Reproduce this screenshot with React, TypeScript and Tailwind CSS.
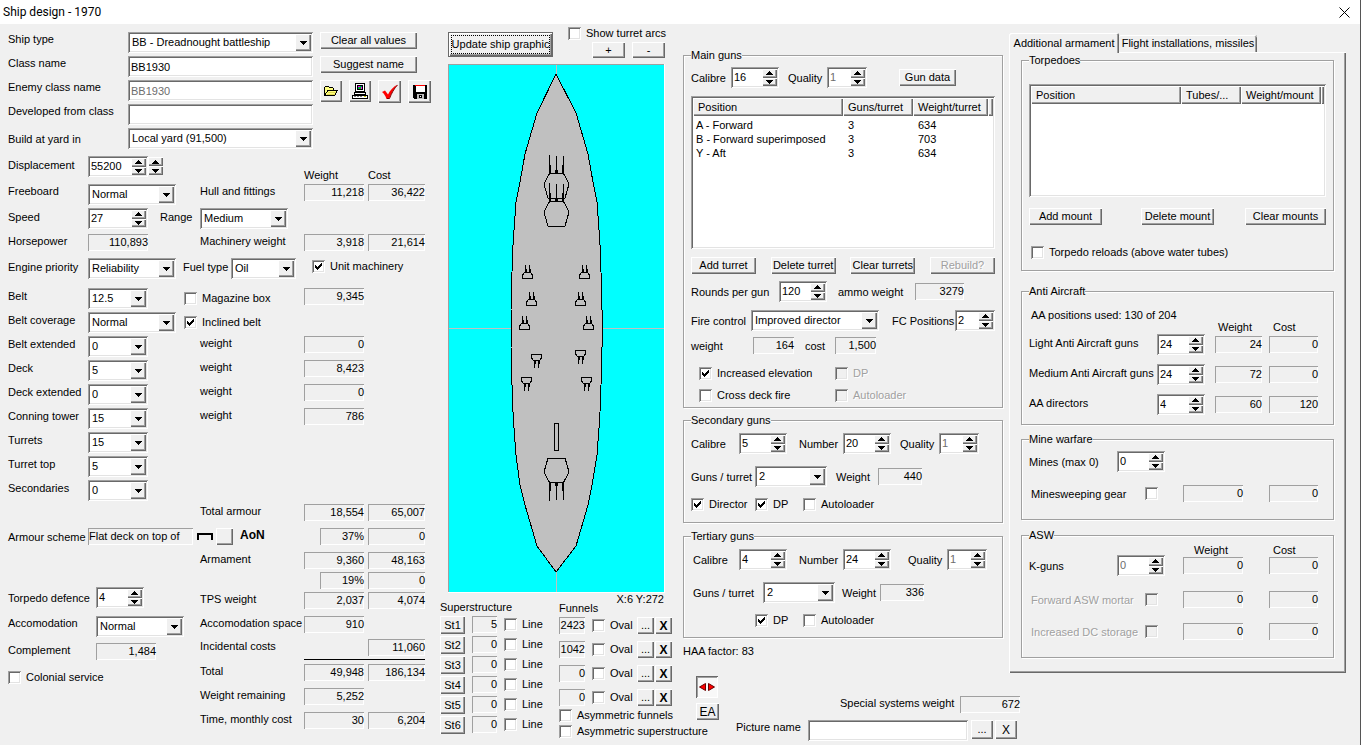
import { ReactNode, useState } from 'react';

const sunken =
  'shadow-[inset_1px_1px_#a0a0a0,inset_-1px_-1px_#fff,inset_2px_2px_#696969,inset_-2px_-2px_#e3e3e3]';
const raised =
  'bg-[#f0f0f0] shadow-[inset_1px_1px_#fff,inset_-1px_-1px_#696969,inset_-2px_-2px_#a0a0a0] active:shadow-[inset_1px_1px_#696969]';
const etched = 'shadow-[inset_1px_1px_#a0a0a0,inset_-1px_-1px_#fff]';

interface LabelProps {
  children: ReactNode;
  htmlFor?: string;
  className?: string;
}

const Label = ({ children, htmlFor, className = '' }: LabelProps) => (
  <label
    htmlFor={htmlFor}
    className={`block shrink-0 whitespace-nowrap leading-[14px] ${className}`}
  >
    {children}
  </label>
);

const DownArrow = () => (
  <svg width="7" height="4" viewBox="0 0 7 4" shapeRendering="crispEdges">
    <path d="M0 0h7v1h-1v1h-1v1h-1v1h-1v-1h-1v-1h-1v-1h-1z" />
  </svg>
);

const UpArrow = () => (
  <svg width="7" height="4" viewBox="0 0 7 4" shapeRendering="crispEdges">
    <path d="M0 4h7v-1h-1v-1h-1v-1h-1v-1h-1v1h-1v1h-1v1h-1z" />
  </svg>
);

interface SelectProps {
  id: string;
  value: string;
  options?: string[];
  className?: string;
}

const Select = ({ id, value, options = [], className = '' }: SelectProps) => (
  <div className={`relative h-[21px] shrink-0 bg-white ${sunken} ${className}`}>
    <select
      id={id}
      defaultValue={value}
      className="h-full w-full appearance-none bg-transparent pl-1 outline-none"
    >
      <option>{value}</option>
      {options.map((option) => (
        <option key={option}>{option}</option>
      ))}
    </select>
    <span
      className={`pointer-events-none absolute inset-y-0.5 right-0.5 flex w-4 items-center justify-center ${raised}`}
    >
      <DownArrow />
    </span>
  </div>
);

const SpinButtons = ({ name }: { name: string }) => (
  <span className="flex w-[15px] shrink-0 flex-col">
    <button
      type="button"
      aria-label={`Increase ${name}`}
      className={`flex flex-1 items-center justify-center ${raised}`}
    >
      <UpArrow />
    </button>
    <button
      type="button"
      aria-label={`Decrease ${name}`}
      className={`flex flex-1 items-center justify-center ${raised}`}
    >
      <DownArrow />
    </button>
  </span>
);

interface SpinnerProps {
  id: string;
  value: string;
  disabled?: boolean;
  className?: string;
}

const Spinner = ({ id, value, disabled, className = 'w-12' }: SpinnerProps) => (
  <div className={`flex h-[21px] shrink-0 bg-white p-0.5 ${sunken} ${className}`}>
    <input
      id={id}
      type="text"
      defaultValue={value}
      disabled={disabled}
      className="w-0 min-w-0 flex-1 bg-transparent pl-px outline-none disabled:text-[#6d6d6d]"
    />
    <SpinButtons name={id} />
  </div>
);

interface TextBoxProps {
  id: string;
  value?: string;
  disabled?: boolean;
  className?: string;
}

const TextBox = ({ id, value, disabled, className = '' }: TextBoxProps) => (
  <input
    id={id}
    type="text"
    defaultValue={value}
    disabled={disabled}
    className={`h-[21px] shrink-0 bg-white px-[3px] outline-none disabled:text-[#6d6d6d] ${sunken} ${className}`}
  />
);

const Value = ({
  children,
  className = 'w-15',
}: {
  children: ReactNode;
  className?: string;
}) => (
  <output
    className={`block h-[17px] shrink-0 text-right leading-[17px] ${etched} ${className}`}
  >
    {children}
  </output>
);

interface CheckProps {
  children?: ReactNode;
  label?: string;
  checked?: boolean;
  disabled?: boolean;
  className?: string;
}

const Check = ({
  children,
  label,
  checked,
  disabled,
  className = '',
}: CheckProps) => (
  <label
    className={`flex h-[13px] shrink-0 items-center whitespace-nowrap ${
      disabled ? 'text-[#a0a0a0] [text-shadow:1px_1px_#fff]' : ''
    } ${className}`}
  >
    <span className="grid size-[13px] shrink-0">
      <input
        type="checkbox"
        aria-label={label}
        defaultChecked={checked}
        disabled={disabled}
        className={`peer col-start-1 row-start-1 size-[13px] appearance-none bg-white outline-none disabled:bg-[#f0f0f0] ${sunken}`}
      />
      <svg
        viewBox="0 0 13 13"
        shapeRendering="crispEdges"
        className="pointer-events-none invisible col-start-1 row-start-1 size-[13px] peer-checked:visible"
      >
        <path d="M3 5h1v1h1v1h1v-1h1v-1h1v-1h1v-1h1v3h-1v1h-1v1h-1v1h-1v1h-1v-1h-1v-1h-1z" />
      </svg>
    </span>
    {children && <span className="pl-[5px]">{children}</span>}
  </label>
);

interface ButtonProps {
  children?: ReactNode;
  label?: string;
  disabled?: boolean;
  className?: string;
}

const Button = ({ children, label, disabled, className = '' }: ButtonProps) => (
  <button
    type="button"
    aria-label={label}
    disabled={disabled}
    className={`flex shrink-0 items-center justify-center whitespace-nowrap disabled:text-[#a0a0a0] disabled:[text-shadow:1px_1px_#fff] ${raised} ${className}`}
  >
    {children}
  </button>
);

const Group = ({
  title,
  children,
  className = '',
}: {
  title: string;
  children: ReactNode;
  className?: string;
}) => (
  <fieldset
    className={`min-w-0 border border-[#a0a0a0] shadow-[1px_1px_#fff,inset_1px_1px_#fff] ${className}`}
  >
    <legend className="ml-[7px] bg-[#f0f0f0] leading-4">{title}</legend>
    {children}
  </fieldset>
);

interface ListProps {
  label: string;
  columns: { title: string; width: string }[];
  rows: string[][];
  className?: string;
}

const List = ({ label, columns, rows, className = '' }: ListProps) => (
  <div className={`overflow-hidden bg-white p-0.5 ${sunken} ${className}`}>
    <table aria-label={label} className="w-full table-fixed border-collapse">
      <thead>
        <tr>
          {columns.map((column) => (
            <th
              key={column.title}
              className={`h-[18px] truncate pl-[5px] text-left font-normal ${raised} ${column.width}`}
            >
              {column.title}
            </th>
          ))}
          <td className={`h-[18px] ${raised}`} />
        </tr>
      </thead>
      <tbody className="before:block before:h-0.5">
        {rows.map((row) => (
          <tr key={row[0]} className="h-3.5">
            {row.map((cell, i) => (
              <td
                key={i}
                className={`p-0 leading-3.5 whitespace-nowrap ${i ? 'pl-[5px]' : 'pl-[3px]'}`}
              >
                {cell}
              </td>
            ))}
            <td />
          </tr>
        ))}
      </tbody>
    </table>
  </div>
);

const FolderIcon = () => (
  <svg width="16" height="16" viewBox="0 0 16 16" shapeRendering="crispEdges">
    <path
      d="M1.500 12.500V4.500L2.500 3.500H5.500L6.500 4.500H9.500L10.500 5.500V7.500H14.500L11.500 12.500z"
      fill="#ffff80"
      stroke="#000"
    />
    <path d="M2 11.500L5 7.500H11" fill="none" stroke="#000" />
    <path d="M5 9h8v1H5zM4 11h8v1H4z" fill="#e0d850" />
  </svg>
);

const PrinterIcon = () => (
  <svg width="16" height="16" viewBox="0 0 16 16" shapeRendering="crispEdges">
    <path d="M3.500 .5h9v8h-9z" fill="#fff" stroke="#000" />
    <path d="M5.500 2.500h5v4h-5z" fill="#008080" stroke="#000" />
    <path d="M6 3h2v1H6zM9 4h1v2H9z" fill="#f0f" />
    <path d="M7 4h2v2H7z" fill="#0c0" />
    <path d="M2.500 9.500h11v2h-11zM.5 12.500h15v3H.5z" fill="#fff" stroke="#000" />
    <path d="M2 13.500h2M5 13.500h2M8 13.500h2" stroke="#808080" />
    <path d="M12 13h2v1h-2z" fill="#cc0" />
  </svg>
);

const TickIcon = () => (
  <svg width="16" height="16" viewBox="0 0 16 16">
    <path
      d="M0 8L3 6.500L6 10.500C8 6.500 11 3 15.500 .5C12 4.500 9.500 9 7 15H4.500C3.500 12 2 9.500 0 8z"
      fill="#f00"
    />
    <path
      d="M15.500 1C12 4.500 9.500 9.500 7.500 14.500H5"
      fill="none"
      stroke="#800000"
    />
  </svg>
);

const DiskIcon = () => (
  <svg width="16" height="16" viewBox="0 0 16 16" shapeRendering="crispEdges">
    <path d="M1 1h14v14H2l-1-1z" />
    <path d="M4 2h9v6H4z" fill="#fff" />
    <path d="M3 1h10v1H3z" fill="#f00" />
    <path d="M5 10h7v5H5z" fill="#c0c0c0" />
    <path d="M7 11h3v3H7z" />
    <path d="M8 12h1v1H8z" fill="#fff" />
  </svg>
);

const TripleTurret = () => (
  <g>
    <path d="M-6.500 -10.500L-12 0L-8 14H9L13 0L7.500 -10.500" />
    <path d="M-6.500 -29V-10M.5 -28V-10M7.500 -28V-10" />
    <path d="M-5.500 -19V-10.500H-.5V-14M1.500 -14V-10.500H6.500V-19" />
  </g>
);

const TwinTurret = () => (
  <g>
    <path d="M-1.500 -7V0M2.500 -7V0" />
    <path d="M-.5 -3V0M3.500 -3V0" />
    <path d="M-2.500 .5H3.500L5.500 3V6.500H-4.500V3z" />
  </g>
);

const hull =
  '108,10 128,49 140,90 145,118 149,138 151,166 152,181 153,208 154,246 154,283 153,321 152,348 151,364 149,391 144,421 140,441 128,482 108,508 89,482 77,441 72,421 68,391 66,364 65,348 64,321 63,283 63,246 64,208 65,181 66,166 68,138 72,118 77,90 89,49';

const mainTurrets = [
  { x: 108, y: 120, flip: 1 },
  { x: 108, y: 148, flip: 1 },
  { x: 108, y: 408, flip: -1 },
];

const lightTurrets = [
  { x: 79, y: 208, flip: 1 },
  { x: 136, y: 208, flip: 1 },
  { x: 83, y: 235, flip: 1 },
  { x: 132, y: 235, flip: 1 },
  { x: 76, y: 259, flip: 1 },
  { x: 140, y: 259, flip: 1 },
  { x: 88, y: 297, flip: -1 },
  { x: 132, y: 293, flip: -1 },
  { x: 78, y: 320, flip: -1 },
  { x: 138, y: 320, flip: -1 },
];

const ShipGraphic = () => (
  <svg
    viewBox="0 0 217 529"
    shapeRendering="crispEdges"
    role="img"
    aria-label="Ship graphic"
    className="block h-[529px] w-[217px] shrink-0"
  >
    <rect width="217" height="529" fill="#0ff" />
    <path d="M0 264.500H217M108.500 0V529" stroke="#c0c0c0" />
    <polygon points={hull} fill="#c0c0c0" stroke="#000" />
    <g fill="none" stroke="#000">
      {mainTurrets.map((t) => (
        <g key={t.y} transform={`translate(${t.x} ${t.y}) scale(1 ${t.flip})`}>
          <TripleTurret />
        </g>
      ))}
      {lightTurrets.map((t) => (
        <g
          key={`${t.x}-${t.y}`}
          transform={`translate(${t.x} ${t.y}) scale(1 ${t.flip})`}
        >
          <TwinTurret />
        </g>
      ))}
      <rect x="106.500" y="359.500" width="4" height="27" />
    </g>
    <path d="M.5 529V.5H217" fill="none" stroke="#a0a0a0" />
    <path d="M216.500 0V528.500H0" fill="none" stroke="#fff" />
  </svg>
);

const armour = [
  { id: 'belt-extended', label: 'Belt extended', value: '0', weight: '0' },
  { id: 'deck', label: 'Deck', value: '5', weight: '8,423' },
  { id: 'deck-extended', label: 'Deck extended', value: '0', weight: '0' },
  { id: 'conning-tower', label: 'Conning tower', value: '15', weight: '786' },
  { id: 'turrets', label: 'Turrets', value: '15' },
  { id: 'turret-top', label: 'Turret top', value: '5' },
  { id: 'secondaries', label: 'Secondaries', value: '0' },
];

const HullForm = () => (
  <div className="pt-2 pl-2">
    <div className="flex gap-[7px]">
      <div className="flex flex-col gap-[3px]">
        <div className="flex">
          <Label htmlFor="ship-type" className="w-[120px]">
            Ship type
          </Label>
          <Select
            id="ship-type"
            value="BB - Dreadnought battleship"
            className="w-[185px]"
          />
        </div>
        <div className="flex">
          <Label htmlFor="class-name" className="w-[120px]">
            Class name
          </Label>
          <TextBox id="class-name" value="BB1930" className="w-[185px]" />
        </div>
        <div className="flex">
          <Label htmlFor="enemy-name" className="w-[120px]">
            Enemy class name
          </Label>
          <TextBox id="enemy-name" value="BB1930" disabled className="w-[185px]" />
        </div>
        <div className="flex">
          <Label htmlFor="developed-from" className="w-[120px]">
            Developed from class
          </Label>
          <TextBox id="developed-from" className="w-[185px]" />
        </div>
        <div className="flex items-center">
          <Label htmlFor="yard" className="w-[120px]">
            Build at yard in
          </Label>
          <Select id="yard" value="Local yard (91,500)" className="w-[185px]" />
        </div>
      </div>
      <div className="flex flex-col gap-[7px]">
        <Button className="h-[17px] w-[97px]">Clear all values</Button>
        <Button className="h-[17px] w-[97px]">Suggest name</Button>
        <div className="flex gap-[7px]">
          <Button label="Open" className="size-[22px]">
            <FolderIcon />
          </Button>
          <Button label="Print" className="size-[22px]">
            <PrinterIcon />
          </Button>
          <Button label="Accept" className="size-[23px]">
            <TickIcon />
          </Button>
          <Button label="Save" className="size-[23px]">
            <DiskIcon />
          </Button>
        </div>
      </div>
    </div>

    <div className="mt-[7px] flex h-7">
      <Label htmlFor="displacement" className="w-20 pt-0.5">
        Displacement
      </Label>
      <Spinner id="displacement" value="55200" className="w-15" />
      <span className="mt-px flex h-[18px]">
        <SpinButtons name="displacement step" />
      </span>
      <Label className="ml-[141px] w-16 self-end pb-0.5">Weight</Label>
      <Label className="self-end pb-0.5">Cost</Label>
    </div>
    <div className="flex h-6">
      <Label htmlFor="freeboard" className="w-20">
        Freeboard
      </Label>
      <Select id="freeboard" value="Normal" className="w-22" />
      <Label className="ml-6 w-26">Hull and fittings</Label>
      <Value>11,218</Value>
      <Value className="ml-1 w-[57px]">36,422</Value>
    </div>
    <div className="flex h-[26px]">
      <Label htmlFor="speed" className="w-20 pt-0.5">
        Speed
      </Label>
      <Spinner id="speed" value="27" className="w-15" />
      <Label htmlFor="range" className="ml-3 w-10 pt-0.5">
        Range
      </Label>
      <Select id="range" value="Medium" options={['Short', 'Long']} className="w-22" />
    </div>
    <div className="flex h-6">
      <Label className="w-20">Horsepower</Label>
      <Value>110,893</Value>
      <Label className="ml-13 w-26">Machinery weight</Label>
      <Value>3,918</Value>
      <Value className="ml-1 w-[57px]">21,614</Value>
    </div>
    <div className="flex h-[30px]">
      <Label htmlFor="engine-priority" className="w-20 pt-0.5">
        Engine priority
      </Label>
      <Select
        id="engine-priority"
        value="Reliability"
        options={['Normal', 'Speed']}
        className="w-22"
      />
      <Label htmlFor="fuel" className="ml-[7px] w-12 pt-0.5">
        Fuel type
      </Label>
      <Select id="fuel" value="Oil" options={['Coal']} className="w-[65px]" />
      <Check checked className="mt-0.5 ml-4">
        Unit machinery
      </Check>
    </div>
    <div className="flex h-6">
      <Label htmlFor="belt" className="w-20 pt-px">
        Belt
      </Label>
      <Select id="belt" value="12.5" className="w-15" />
      <Check className="mt-1 ml-9 w-30">Magazine box</Check>
      <Value>9,345</Value>
    </div>
    <div className="flex h-6">
      <Label htmlFor="belt-coverage" className="w-20 pt-px">
        Belt coverage
      </Label>
      <Select id="belt-coverage" value="Normal" className="w-22" />
      <Check checked className="mt-1 ml-2">
        Inclined belt
      </Check>
    </div>
    {armour.map((row) => (
      <div key={row.id} className="flex h-6">
        <Label htmlFor={row.id} className="w-20 pt-px">
          {row.label}
        </Label>
        <Select id={row.id} value={row.value} className="w-15" />
        {row.weight && (
          <>
            <Label className="ml-13 w-26">weight</Label>
            <Value>{row.weight}</Value>
          </>
        )}
      </div>
    ))}
    <div className="flex h-6 pl-48">
      <Label className="w-26">Total armour</Label>
      <Value>18,554</Value>
      <Value className="ml-1 w-[57px]">65,007</Value>
    </div>
    <div className="flex h-6">
      <Label className="w-20 pt-0.5">Armour scheme</Label>
      <div className={`h-[17px] w-[105px] pl-px leading-[17px] whitespace-nowrap ${etched}`}>
        Flat deck on top of
      </div>
      <svg
        width="16"
        height="8"
        viewBox="0 0 16 8"
        shapeRendering="crispEdges"
        className="mt-1 ml-1"
      >
        <path
          d="M1 8V1.500H15V8"
          fill="none"
          stroke="#000"
          strokeWidth="2"
        />
      </svg>
      <Button label="Change armour scheme" className="ml-[3px] size-[17px]" />
      <span className="ml-[7px] w-20 text-xs leading-[14px] font-bold">AoN</span>
      <Value className="w-11">37%</Value>
      <Value className="ml-1 w-[57px]">0</Value>
    </div>
    <div className="flex">
      <div className="w-48 pt-[35px]">
        <div className="flex h-[29px]">
          <Label htmlFor="torpedo-defence" className="w-22 pt-1">
            Torpedo defence
          </Label>
          <Spinner id="torpedo-defence" value="4" />
        </div>
        <div className="flex h-[27px]">
          <Label htmlFor="accomodation" className="w-22">
            Accomodation
          </Label>
          <Select
            id="accomodation"
            value="Normal"
            options={['Cramped', 'Spacious']}
            className="w-22"
          />
        </div>
        <div className="flex h-7">
          <Label className="w-22">Complement</Label>
          <Value>1,484</Value>
        </div>
        <Check>Colonial service</Check>
      </div>
      <div>
        <div className="flex h-5">
          <Label className="w-26">Armament</Label>
          <Value>9,360</Value>
          <Value className="ml-1 w-[57px]">48,163</Value>
        </div>
        <div className="flex h-5 pl-30">
          <Value className="w-11">19%</Value>
          <Value className="ml-1 w-[57px]">0</Value>
        </div>
        <div className="flex h-6">
          <Label className="w-26">TPS weight</Label>
          <Value>2,037</Value>
          <Value className="ml-1 w-[57px]">4,074</Value>
        </div>
        <div className="flex h-[23px]">
          <Label className="w-26">Accomodation space</Label>
          <Value>910</Value>
        </div>
        <div className="flex h-5">
          <Label className="w-42">Incidental costs</Label>
          <Value className="w-[57px]">11,060</Value>
        </div>
        <hr className="ml-26 h-[5px] border-0 border-t border-black" />
        <div className="flex h-6">
          <Label className="w-26">Total</Label>
          <Value>49,948</Value>
          <Value className="ml-1 w-[57px]">186,134</Value>
        </div>
        <div className="flex h-6">
          <Label className="w-26">Weight remaining</Label>
          <Value>5,252</Value>
        </div>
        <div className="flex h-6">
          <Label className="w-26">Time, monthly cost</Label>
          <Value>30</Value>
          <Value className="ml-1 w-[57px]">6,204</Value>
        </div>
      </div>
    </div>
  </div>
);

const superstructure = ['5', '0', '0', '0', '0', '0'];
const funnels = ['2423', '1042', '0', '0'];

const ShipView = () => (
  <div className="pt-[3px]">
    <div className="flex h-[37px] pl-2">
      <Button className="mt-[5px] h-[25px] w-[105px] border border-[#696969] p-0.5">
        <span className="flex h-full w-full items-center justify-center border border-dotted border-black">
          Update ship graphic
        </span>
      </Button>
      <div className="ml-[15px]">
        <Check>Show turret arcs</Check>
        <div className="mt-0.5 ml-6 flex gap-[7px]">
          <Button className="h-4 w-[33px]">+</Button>
          <Button className="h-4 w-[33px]">-</Button>
        </div>
      </div>
    </div>
    <div className="w-[225px] pl-2">
      <ShipGraphic />
      <p className="h-[7px] pr-px text-right leading-3">X:6 Y:272</p>
    </div>
    <div className="flex">
      <div className="w-[119px] shrink-0">
        <h2 className="h-4 leading-[14px]">Superstructure</h2>
        {superstructure.map((count, i) => (
          <div key={i} className="flex h-5 items-start">
            <Button className="h-[18px] w-[25px]">St{i + 1}</Button>
            <Value className="ml-[7px] w-[25px]">{count}</Value>
            <Check className="mt-0.5 ml-[7px]">Line</Check>
          </div>
        ))}
      </div>
      <div className="shrink-0">
        <h2 className="h-[17px] leading-4">Funnels</h2>
        {funnels.map((size, i) => (
          <div key={i} className="flex h-6 items-start">
            <Value className="w-[26px]">{size}</Value>
            <Check className="mt-0.5 ml-[7px] w-[45px]">Oval</Check>
            <Button className="h-[17px] w-[17px]">...</Button>
            <Button
              label="Remove funnel"
              className="ml-px h-[17px] w-[17px] text-xs font-bold"
            >
              X
            </Button>
          </div>
        ))}
        <Check className="-mt-1">Asymmetric funnels</Check>
        <Check className="mt-[3px]">Asymmetric superstructure</Check>
      </div>
    </div>
  </div>
);

const MainGuns = () => (
  <Group title="Main guns" className="h-[361px]">
    <div className="px-[7px] pt-1">
      <div className="flex items-center">
        <Label htmlFor="calibre-main" className="w-10">
          Calibre
        </Label>
        <Spinner id="calibre-main" value="16" />
        <Label htmlFor="quality-main" className="ml-[9px] w-[39px]">
          Quality
        </Label>
        <Spinner id="quality-main" value="1" disabled className="w-10" />
        <Button className="ml-8 h-[17px] w-[57px]">Gun data</Button>
      </div>
      <List
        label="Main gun turrets"
        columns={[
          { title: 'Position', width: 'w-[150px]' },
          { title: 'Guns/turret', width: 'w-[70px]' },
          { title: 'Weight/turret', width: 'w-[75px]' },
        ]}
        rows={[
          ['A - Forward', '3', '634'],
          ['B - Forward superimposed', '3', '703'],
          ['Y - Aft', '3', '634'],
        ]}
        className="mt-2 h-[153px]"
      />
      <div className="mt-2 flex justify-between">
        <Button className="h-[17px] w-[65px]">Add turret</Button>
        <Button className="h-[17px] w-[65px]">Delete turret</Button>
        <Button className="h-[17px] w-[65px]">Clear turrets</Button>
        <Button disabled className="h-[17px] w-[65px]">
          Rebuild?
        </Button>
      </div>
      <div className="mt-[7px] flex items-center">
        <Label htmlFor="rounds" className="w-22">
          Rounds per gun
        </Label>
        <Spinner id="rounds" value="120" />
        <Label className="ml-[11px] w-[77px]">ammo weight</Label>
        <Value className="w-[49px]">3279</Value>
      </div>
      <div className="mt-2 flex items-center">
        <Label htmlFor="fire-control" className="w-15">
          Fire control
        </Label>
        <Select id="fire-control" value="Improved director" className="w-32" />
        <Label htmlFor="fc-positions" className="ml-[13px] w-[63px]">
          FC Positions
        </Label>
        <Spinner id="fc-positions" value="2" className="w-10" />
      </div>
      <div className="mt-1.5 flex items-center">
        <Label className="w-[62px]">weight</Label>
        <Value className="w-[41px]">164</Value>
        <Label className="ml-[11px] w-[30px]">cost</Label>
        <Value className="w-[41px]">1,500</Value>
      </div>
      <div className="mt-[13px] grid grid-cols-[136px_auto] gap-y-[9px] pl-2">
        <Check checked>Increased elevation</Check>
        <Check disabled>DP</Check>
        <Check>Cross deck fire</Check>
        <Check disabled>Autoloader</Check>
      </div>
    </div>
  </Group>
);

const SecondaryGuns = () => (
  <Group title="Secondary guns" className="mt-1 h-[111px]">
    <div className="px-[7px] pt-[5px]">
      <div className="flex items-center">
        <Label htmlFor="calibre-sec" className="w-12">
          Calibre
        </Label>
        <Spinner id="calibre-sec" value="5" />
        <Label htmlFor="number-sec" className="ml-3 w-11">
          Number
        </Label>
        <Spinner id="number-sec" value="20" />
        <Label htmlFor="quality-sec" className="ml-[9px] w-[39px]">
          Quality
        </Label>
        <Spinner id="quality-sec" value="1" disabled className="w-10" />
      </div>
      <div className="mt-3 flex items-center">
        <Label htmlFor="per-turret-sec" className="w-16">
          Guns / turret
        </Label>
        <Select id="per-turret-sec" value="2" className="w-18" />
        <Label className="ml-[9px] w-[42px]">Weight</Label>
        <Value className="w-11">440</Value>
      </div>
      <div className="mt-[11px] flex">
        <Check checked className="w-16">
          Director
        </Check>
        <Check checked className="w-12">
          DP
        </Check>
        <Check>Autoloader</Check>
      </div>
    </div>
  </Group>
);

const TertiaryGuns = () => (
  <Group title="Tertiary guns" className="mt-[5px] h-[110px]">
    <div className="pt-[5px] pl-[9px]">
      <div className="flex items-center">
        <Label htmlFor="calibre-ter" className="w-[46px]">
          Calibre
        </Label>
        <Spinner id="calibre-ter" value="4" />
        <Label htmlFor="number-ter" className="ml-3 w-11">
          Number
        </Label>
        <Spinner id="number-ter" value="24" />
        <Label htmlFor="quality-ter" className="ml-[17px] w-[39px]">
          Quality
        </Label>
        <Spinner id="quality-ter" value="1" disabled className="w-10" />
      </div>
      <div className="mt-3 flex items-center">
        <Label htmlFor="per-turret-ter" className="w-[70px]">
          Guns / turret
        </Label>
        <Select id="per-turret-ter" value="2" className="w-18" />
        <Label className="ml-[7px] w-[38px]">Weight</Label>
        <Value className="w-11">336</Value>
      </div>
      <div className="mt-[11px] flex pl-[62px]">
        <Check checked className="w-12">
          DP
        </Check>
        <Check>Autoloader</Check>
      </div>
    </div>
  </Group>
);

const antiAircraft = [
  { id: 'light-aa', label: 'Light Anti Aircraft guns', value: '24', weight: '24', cost: '0' },
  { id: 'medium-aa', label: 'Medium Anti Aircraft guns', value: '24', weight: '72', cost: '0' },
  { id: 'aa-directors', label: 'AA directors', value: '4', weight: '60', cost: '120' },
];

const AdditionalArmament = () => (
  <div className="px-3 pb-[15px]">
    <Group title="Torpedoes" className="h-[219px]">
      <div className="px-[7px] pt-4">
        <List
          label="Torpedo mounts"
          columns={[
            { title: 'Position', width: 'w-[150px]' },
            { title: 'Tubes/...', width: 'w-[60px]' },
            { title: 'Weight/mount', width: 'w-[80px]' },
          ]}
          rows={[]}
          className="h-[113px]"
        />
        <div className="mt-[11px] flex justify-between">
          <Button className="h-[17px] w-[73px]">Add mount</Button>
          <Button className="ml-2 h-[17px] w-[73px]">Delete mount</Button>
          <Button className="h-[17px] w-[81px]">Clear mounts</Button>
        </div>
        <Check className="mt-[21px] ml-0.5">
          Torpedo reloads (above water tubes)
        </Check>
      </div>
    </Group>

    <Group title="Anti Aircraft" className="mt-3 h-[142px]">
      <div className="px-[7px] pt-[9px]">
        <div className="flex h-[26px]">
          <Label className="w-[189px] pl-0.5">AA positions used: 130 of 204</Label>
          <Label className="w-[55px] self-end">Weight</Label>
          <Label className="self-end">Cost</Label>
        </div>
        {antiAircraft.map((gun) => (
          <div key={gun.id} className="flex h-[30px] items-start">
            <Label htmlFor={gun.id} className="w-32 pt-0.5">
              {gun.label}
            </Label>
            <Spinner id={gun.id} value={gun.value} />
            <Value className="mt-0.5 ml-2.5 w-[47px]">{gun.weight}</Value>
            <Value className="mt-0.5 ml-[7px] w-[49px]">{gun.cost}</Value>
          </div>
        ))}
      </div>
    </Group>

    <Group title="Mine warfare" className="mt-1.5 h-[89px]">
      <div className="px-[7px] pt-1">
        <div className="flex items-center">
          <Label htmlFor="mines" className="w-22">
            Mines (max 0)
          </Label>
          <Spinner id="mines" value="0" />
        </div>
        <div className="mt-[13px] flex items-center pl-0.5">
          <Label className="w-[114px]">Minesweeping gear</Label>
          <Check label="Minesweeping gear" />
          <Value className="ml-[25px] w-15">0</Value>
          <Value className="ml-[26px] w-[49px]">0</Value>
        </div>
      </div>
    </Group>

    <Group title="ASW" className="mt-[7px] h-[131px]">
      <div className="px-[7px]">
        <div className="flex h-3 pl-[165px]">
          <Label className="w-[79px]">Weight</Label>
          <Label>Cost</Label>
        </div>
        <div className="flex items-center">
          <Label htmlFor="k-guns" className="w-22">
            K-guns
          </Label>
          <Spinner id="k-guns" value="0" disabled />
          <Value className="ml-[18px] w-15">0</Value>
          <Value className="ml-[26px] w-[49px]">0</Value>
        </div>
        {['Forward ASW mortar', 'Increased DC storage'].map((name) => (
          <div key={name} className="mt-[15px] flex items-center pl-0.5">
            <Label className="w-[114px] text-[#a0a0a0] [text-shadow:1px_1px_#fff]">
              {name}
            </Label>
            <Check label={name} disabled />
            <Value className="ml-[25px] w-15">0</Value>
            <Value className="ml-[26px] w-[49px]">0</Value>
          </div>
        ))}
      </div>
    </Group>
  </div>
);

const ArmamentTabs = () => {
  const [tab, setTab] = useState(0);

  return (
    <div className="w-[337px] pt-[9px]">
      <div role="tablist" className="flex h-[19px] items-end">
        <button
          type="button"
          role="tab"
          aria-selected={tab === 0}
          onClick={() => setTab(0)}
          className="z-10 -mb-px h-5 w-[110px] rounded-t-xs bg-[#f0f0f0] whitespace-nowrap shadow-[inset_1px_1px_#fff,inset_-1px_0_#696969,inset_-2px_0_#a0a0a0]"
        >
          Additional armament
        </button>
        <button
          type="button"
          role="tab"
          aria-selected={tab === 1}
          onClick={() => setTab(1)}
          className="h-[17px] w-[138px] rounded-t-xs whitespace-nowrap shadow-[inset_0_1px_#fff,inset_-1px_0_#696969,inset_-2px_0_#a0a0a0]"
        >
          Flight installations, missiles
        </button>
      </div>
      <div
        role="tabpanel"
        className="shadow-[inset_1px_1px_#fff,inset_-1px_-1px_#696969,inset_-2px_-2px_#a0a0a0]"
      >
        <AdditionalArmament />
      </div>
    </div>
  );
};

const Footer = () => (
  <div className="flex">
    <div className="ml-[13px] flex w-10 flex-col gap-[5px] pt-[3px]">
      <button
        type="button"
        aria-label="Mirror turrets"
        aria-pressed="true"
        className="flex size-[22px] items-center justify-center bg-[#f8f8f8] shadow-[inset_1px_1px_#696969,inset_-1px_-1px_#fff,inset_2px_2px_#a0a0a0]"
      >
        <svg width="16" height="8" viewBox="0 0 16 8">
          <path
            d="M.5 4L6.500 .5V7.500zM15.500 4L9.500 .5V7.500z"
            fill="#f00"
            stroke="#600"
          />
        </svg>
      </button>
      <Button className="h-[17px] w-[23px] text-xs">EA</Button>
    </div>
    <div>
      <div className="mt-[23px] ml-[104px] flex items-start">
        <Label className="w-30">Special systems weight</Label>
        <Value>672</Value>
      </div>
      <div className="mt-[7px] flex items-start">
        <Label htmlFor="picture" className="w-18">
          Picture name
        </Label>
        <TextBox id="picture" className="w-40" />
        <Button label="Browse pictures" className="ml-[3px] h-[19px] w-[22px]">
          ...
        </Button>
        <Button label="Clear picture" className="ml-0.5 h-[19px] w-[22px] text-xs">
          X
        </Button>
      </div>
    </div>
  </div>
);

const App = () => {
  return (
    <div className="flex min-h-screen flex-col overflow-hidden border-r border-[#555] bg-[#f0f0f0] font-['Liberation_Sans',Arial,sans-serif] text-[11px] text-black">
      <header className="flex h-6 items-center justify-between bg-white pr-2.5 pl-[3px]">
        <h1 className="font-['Roboto',sans-serif] text-xs">Ship design - 1970</h1>
        <button type="button" aria-label="Close">
          <svg width="11" height="11" viewBox="0 0 11 11">
            <path d="M.5 .5l10 10M10.500 .5l-10 10" stroke="#000" />
          </svg>
        </button>
      </header>
      <main className="grid flex-1 grid-cols-[minmax(0,440fr)_minmax(0,243fr)_minmax(0,677fr)]">
        <HullForm />
        <ShipView />
        <div>
          <div className="grid grid-cols-[minmax(0,326fr)_minmax(0,351fr)]">
            <div className="w-80 pt-[23px]">
              <MainGuns />
              <SecondaryGuns />
              <TertiaryGuns />
              <p className="mt-1.5 leading-[14px]">HAA factor: 83</p>
            </div>
            <ArmamentTabs />
          </div>
          <Footer />
        </div>
      </main>
    </div>
  );
};

export default App;
